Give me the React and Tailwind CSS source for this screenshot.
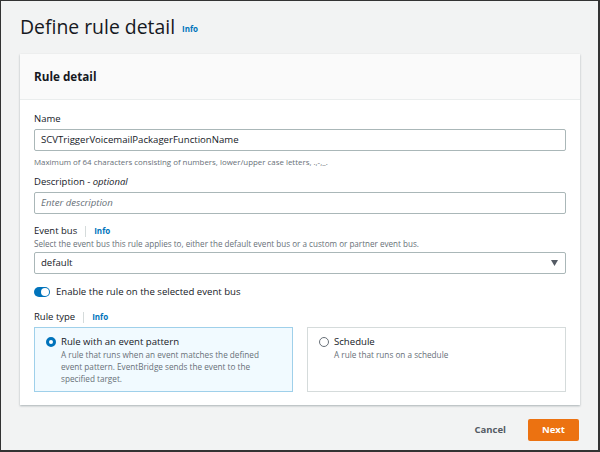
export default function App() {
  const font = "font-['Open_Sans',sans-serif]";
  const Info = ({ className = "" }) => (
    <span className={`text-[8px] font-bold text-[#0073bb] leading-none ${className}`}>Info</span>
  );
  return (
    <div className={`w-[600px] h-[452px] bg-[#f2f3f3] border-t border-l border-r-2 border-b-2 border-[#333] flex flex-col text-[#16191f] ${font}`}>
      <div className="pt-[11px] pl-[19px] h-[40px] flex items-end gap-[7px]">
        <span className="text-[19.4px] leading-[28px]">Define rule detail</span>
        <Info className="mb-[8px]" />
      </div>
      <div className="mt-[13px] mx-[19px] w-[560px] bg-white shadow-[0_1px_2px_rgba(0,28,36,0.3)] flex flex-col">
        <div className="h-[46px] bg-[#fafafa] border-b border-[#eaeded] flex items-center pl-[14px]">
          <span className="text-[11.7px] font-bold">Rule detail</span>
        </div>
        <div className="px-[14px] pt-[12px] pb-[13px] flex flex-col">
          <div className="h-[14px] text-[9.5px] leading-[14px]">Name</div>
          <div className="mt-[3px] h-[22px] border border-[#aab7b8] rounded-[2px] flex items-center pl-[6px] text-[9.6px]">
            SCVTriggerVoicemailPackagerFunctionName
          </div>
          <div className="mt-[4px] h-[14px] text-[7.9px] leading-[14px] text-[#687078]">
            Maximum of 64 characters consisting of numbers, lower/upper case letters, .,-,_.
          </div>
          <div className="mt-[6px] h-[14px] text-[9.5px] leading-[14px]">
            Description - <i>optional</i>
          </div>
          <div className="mt-[3px] h-[22px] border border-[#aab7b8] rounded-[2px] flex items-center pl-[6px] text-[9.6px] italic text-[#687078]">
            Enter description
          </div>
          <div className="mt-[10px] h-[14px] flex items-center text-[9.5px] leading-[14px]">
            <span>Event bus</span>
            <span className="mx-[8px] w-px h-[11px] bg-[#d5dbdb]" />
            <Info />
          </div>
          <div className="h-[12px] text-[8.1px] leading-[12px] text-[#687078]">
            Select the event bus this rule applies to, either the default event bus or a custom or partner event bus.
          </div>
          <div className="mt-[2px] h-[22px] border border-[#aab7b8] rounded-[2px] flex items-center justify-between pl-[6px] pr-[7px] text-[9.6px]">
            <span>default</span>
            <svg width="7" height="6" viewBox="0 0 7 6"><path d="M0 0H7L3.5 6Z" fill="#545b64" /></svg>
          </div>
          <div className="mt-[10px] h-[16px] flex items-center gap-[6px]">
            <span className="w-[16px] h-[10px] rounded-full bg-[#0073bb] flex items-center justify-end pr-[1px]">
              <span className="w-[8px] h-[8px] rounded-full bg-white" />
            </span>
            <span className="text-[9.6px]">Enable the rule on the selected event bus</span>
          </div>
          <div className="mt-[10px] h-[14px] flex items-center text-[9.5px] leading-[14px]">
            <span>Rule type</span>
            <span className="mx-[8px] w-px h-[11px] bg-[#d5dbdb]" />
            <Info />
          </div>
          <div className="mt-[3px] grid grid-cols-2 gap-[14px]">
            <div className="h-[65px] border border-[#9fd0ea] bg-[#f1faff] flex pl-[11px] pt-[7px] gap-[5px]">
              <span className="mt-[2px] w-[10px] h-[10px] rounded-full border-[3px] border-[#0073bb] bg-white shrink-0" />
              <div className="flex flex-col">
                <span className="text-[9.6px] leading-[14px]">Rule with an event pattern</span>
                <span className="text-[8.2px] leading-[12px] text-[#687078] w-[205px]">
                  A rule that runs when an event matches the defined event pattern. EventBridge sends the event to the specified target.
                </span>
              </div>
            </div>
            <div className="h-[65px] border border-[#d5dbdb] bg-white flex pl-[11px] pt-[7px] gap-[5px]">
              <span className="mt-[2px] w-[10px] h-[10px] rounded-full border border-[#687078] bg-white shrink-0" />
              <div className="flex flex-col">
                <span className="text-[9.6px] leading-[14px]">Schedule</span>
                <span className="text-[8.2px] leading-[12px] text-[#687078]">A rule that runs on a schedule</span>
              </div>
            </div>
          </div>
        </div>
      </div>
      <div className="mt-[14px] mx-[19px] flex justify-end items-center gap-[22px]">
        <span className="text-[9.5px] font-bold text-[#545b64]">Cancel</span>
        <span className="w-[51px] h-[22px] bg-[#ec7211] text-white text-[9.5px] font-bold flex items-center justify-center rounded-[2px]">Next</span>
      </div>
    </div>
  );
}
